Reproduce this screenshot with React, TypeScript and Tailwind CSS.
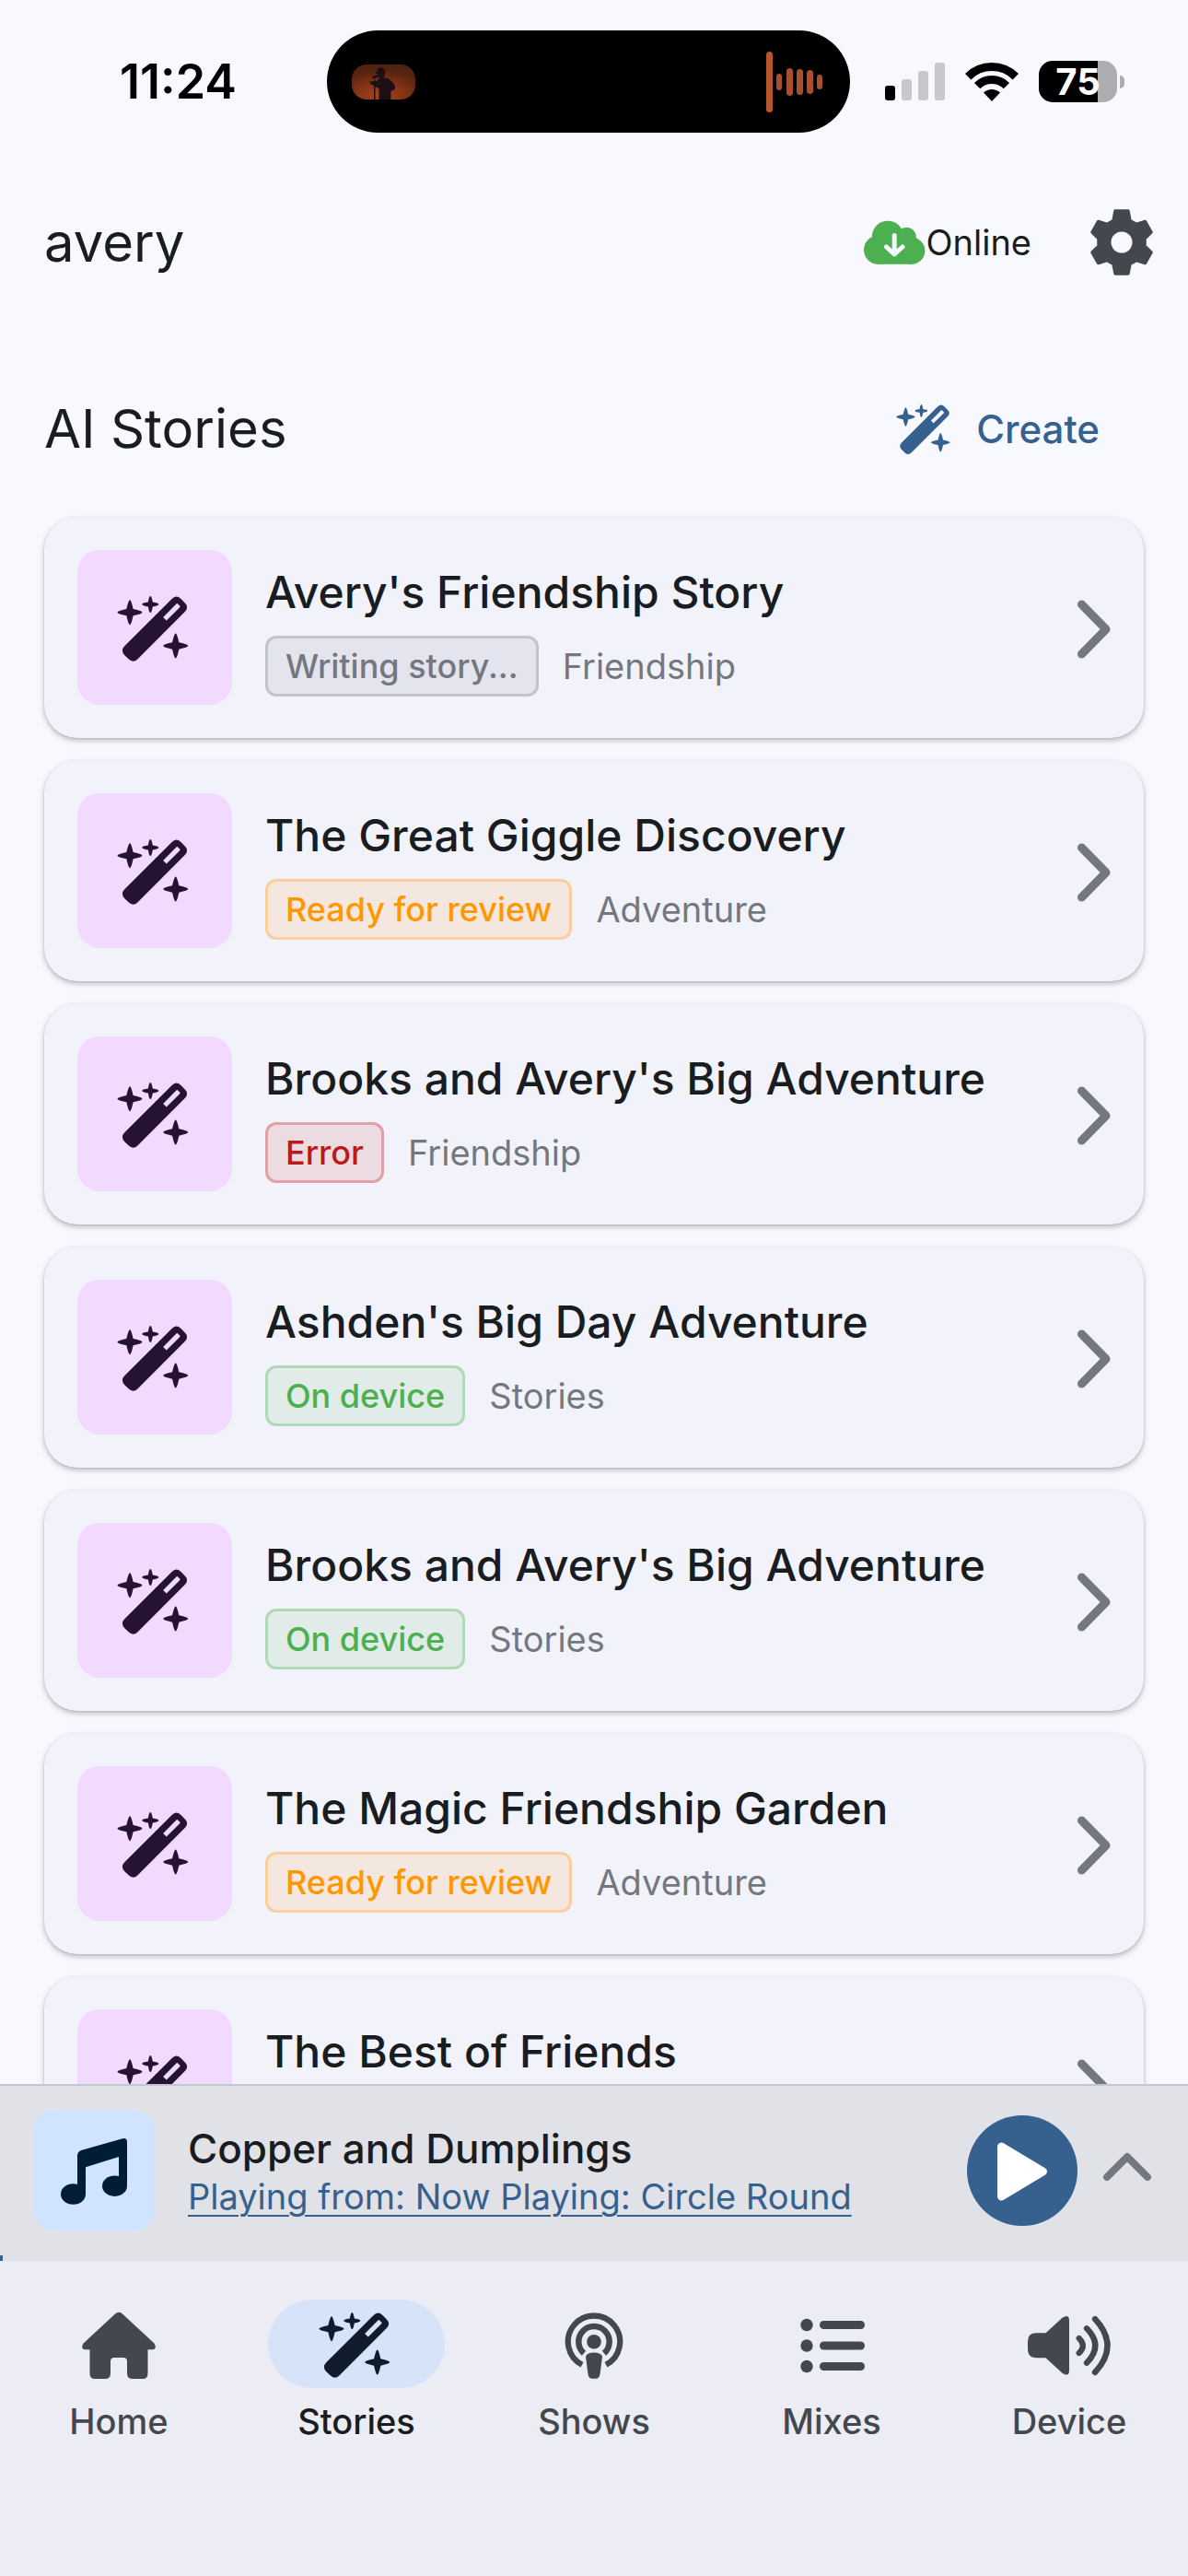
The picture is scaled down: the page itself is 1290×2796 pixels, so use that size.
import clsx from "clsx";
import type { ReactNode } from "react";

type Status = "writing" | "review" | "error" | "device";

const statuses: Record<Status, { label: string; className: string }> = {
  writing: { label: "Writing story...", className: "border-[#c3c3cc] bg-[#e4e4ee] text-[#74777f]" },
  review: { label: "Ready for review", className: "border-[#f9cf9b] bg-[#f4e7e0] text-[#ff9800]" },
  error: { label: "Error", className: "border-[#dfa1a5] bg-[#ecdbe1] text-[#ba1a1a]" },
  device: { label: "On device", className: "border-[#b0d9b8] bg-[#e1ebe7] text-[#4caf50]" },
};

const stories: { title: string; status?: Status; category?: string }[] = [
  { title: "Avery's Friendship Story", status: "writing", category: "Friendship" },
  { title: "The Great Giggle Discovery", status: "review", category: "Adventure" },
  { title: "Brooks and Avery's Big Adventure", status: "error", category: "Friendship" },
  { title: "Ashden's Big Day Adventure", status: "device", category: "Stories" },
  { title: "Brooks and Avery's Big Adventure", status: "device", category: "Stories" },
  { title: "The Magic Friendship Garden", status: "review", category: "Adventure" },
  { title: "The Best of Friends" },
];

// four-pointed sparkle with rounded tips
function star(cx: number, cy: number, r: number) {
  const k = r * 0.27;
  return `M${cx} ${cy - r} Q${cx + 1.5} ${cy - r} ${cx + k} ${cy - k} Q${cx + r} ${cy - 1.5} ${cx + r} ${cy} Q${cx + r} ${cy + 1.5} ${cx + k} ${cy + k} Q${cx + 1.5} ${cy + r} ${cx} ${cy + r} Q${cx - 1.5} ${cy + r} ${cx - k} ${cy + k} Q${cx - r} ${cy + 1.5} ${cx - r} ${cy} Q${cx - r} ${cy - 1.5} ${cx - k} ${cy - k} Q${cx - 1.5} ${cy - r} ${cx} ${cy - r}Z`;
}

function WandIcon({ className }: { className?: string }) {
  return (
    <svg viewBox="-1 -7 84 84" fill="currentColor" className={className} aria-hidden="true">
      <path d={star(14, 18.7, 13.5)} />
      <path d={star(36.3, 10, 9)} />
      <path d={star(63.7, 55, 13.5)} />
      <path
        transform="translate(41 36.7) rotate(45)"
        fillRule="evenodd"
        d="M-3 -43.2H3Q10 -43.2 10 -36V36Q10 43.2 3 43.2H-3Q-10 43.2 -10 36V-36Q-10 -43.2 -3 -43.2ZM-1.5 -37Q-2.6 -37 -2.6 -35.8V-15.5H2.6V-35.8Q2.6 -37 1.5 -37Z"
      />
    </svg>
  );
}

function HomeIcon() {
  return (
    <svg viewBox="0 0 84 84" fill="currentColor" className="size-[84px]" aria-hidden="true">
      <path d="M37.5 10Q42 5.5 46.5 10L80.5 41.5Q84 48 78 48.2H73.5V74Q73.5 80 68 80H57Q51 80 51 74V61Q51 57 47 57H37Q33 57 33 61V74Q33 80 27 80H16Q10.5 80 10.5 74V48.2H6Q0 48 3.5 41.5Z" />
    </svg>
  );
}

function PodcastIcon() {
  return (
    <svg viewBox="0 0 84 84" fill="none" stroke="currentColor" className="size-[84px]" aria-hidden="true">
      <path d="M29 64.7A28.2 28.2 0 1 1 55 64.7" strokeWidth="6.3" />
      <path d="M31 52.3A16.7 16.7 0 1 1 53 52.3" strokeWidth="6.5" />
      <circle cx="42" cy="39.7" r="7.8" fill="currentColor" stroke="none" />
      <path d="M33 56Q34 51.5 42 51.5T51 56L48.5 75Q47.7 79.7 44 79.7H40Q36.3 79.7 35.5 75Z" fill="currentColor" stroke="none" />
    </svg>
  );
}

function ListIcon() {
  return (
    <svg viewBox="0 0 84 84" fill="currentColor" className="size-[84px]" aria-hidden="true">
      {[21.5, 44, 66.5].map((y) => (
        <g key={y}>
          <circle cx="15" cy={y} r="6.7" />
          <rect x="29" y={y - 4.5} width="49" height="9" rx="4.5" />
        </g>
      ))}
    </svg>
  );
}

function SpeakerIcon() {
  return (
    <svg viewBox="0 0 96 84" fill="currentColor" className="h-[84px] w-24" aria-hidden="true">
      <path d="M12 30.3H22.5L40.5 13.8Q48 9 48 17V71Q48 78.5 40.5 73.7L22.5 57.2H12Q3 57 3 48V39.5Q3 30.3 12 30.3Z" />
      <g fill="none" stroke="currentColor" strokeWidth="6.3" strokeLinecap="round">
        <path d="M58.7 36Q67 44 58.7 52" />
        <path d="M67 25.3Q85.6 44 67 62.7" />
        <path d="M76 15Q103 44 76 73" />
      </g>
    </svg>
  );
}

function CloudIcon() {
  return (
    <svg viewBox="0 0 67 48" fill="#4caf50" className="h-12 w-[67px]" aria-hidden="true">
      <circle cx="15.5" cy="32.3" r="15.5" />
      <circle cx="26" cy="18" r="17.2" />
      <circle cx="46.5" cy="18" r="10.2" />
      <circle cx="51.8" cy="33.2" r="14.6" />
      <rect x="15" y="20" width="37" height="27.8" />
      <path d="M33.2 16.5V36M24.5 29L33.2 37L42 29" fill="none" stroke="#f8f9ff" strokeWidth="5" strokeLinecap="round" strokeLinejoin="round" />
    </svg>
  );
}

function GearIcon() {
  return (
    <svg viewBox="-36 -36 72 72" className="size-[72px]" aria-hidden="true">
      <path
        d="M-7 -34H7L9 -23.5L16 -19.5L25.5 -22.5L32 -11L25 -4V4L32 11L25.5 22.5L16 19.5L9 23.5L7 34H-7L-9 23.5L-16 19.5L-25.5 22.5L-32 11L-25 4V-4L-32 -11L-25.5 -22.5L-16 -19.5L-9 -23.5Z"
        fill="#43474e"
        stroke="#43474e"
        strokeWidth="3.5"
        strokeLinejoin="round"
      />
      <circle r="11.5" fill="#f8f9ff" />
    </svg>
  );
}

function MusicIcon() {
  return (
    <svg viewBox="0 0 84 84" fill="currentColor" className="size-[84px]" aria-hidden="true">
      <path d="M24 26Q24 21.5 28 20L73 7.2Q78 6 78 11V58.7H69V27L33 38.3V67.5H24Z" />
      <ellipse cx="19.5" cy="67.5" rx="13.5" ry="11.2" />
      <ellipse cx="64.5" cy="58.7" rx="13.5" ry="11.2" />
    </svg>
  );
}

function StatusBar() {
  return (
    <div className="grid h-[177px] shrink-0 grid-cols-[355fr_568fr_367fr] items-center text-black">
      <time className="pl-8 text-center text-[52px] leading-[60px] font-semibold">11:24</time>
      <div className="flex h-[111px] items-center justify-between rounded-full bg-black pr-[28px] pl-[27px]">
        <svg viewBox="0 0 69 38" className="h-[38px] w-[69px]" aria-hidden="true">
          <defs>
            <radialGradient id="glow" cx="0.45" cy="0.9" r="0.75">
              <stop offset="0" stopColor="#a8441a" />
              <stop offset="0.6" stopColor="#7c3114" />
              <stop offset="1" stopColor="#54230f" />
            </radialGradient>
          </defs>
          <rect width="69" height="38" rx="16" fill="url(#glow)" />
          <g fill="#1c1015">
            <path d="M27 8Q28 3 32 3Q36.500 4 36 9Q36 12 34.500 14Q41 15 43 18Q48 23 47 26Q45 29 42.500 28.500V38H29.500V26L20 21L19.500 18.500L27 18L30.500 14L28.500 12L28 10H25.500Z" />
            <path d="M22 13L29 11L30 13.500L23 15.500ZM24 16H25.500V38H24Z" />
          </g>
        </svg>
        <svg viewBox="0 0 63 68" className="h-[68px] w-[63px]" fill="#a84f30" aria-hidden="true">
          <rect x="0" y="1" width="7" height="66" rx="3.5" fill="#b5562d" />
          <rect x="11" y="25" width="6" height="18" rx="3" />
          <rect x="22" y="19" width="7" height="30" rx="3.5" />
          <rect x="33" y="20" width="7" height="28" rx="3.5" />
          <rect x="44" y="21" width="7" height="26" rx="3.5" />
          <rect x="55" y="26" width="6" height="16" rx="3" />
        </svg>
      </div>
      <div className="flex items-center gap-[22px] pl-[38px]">
        <svg viewBox="0 0 65 42" className="h-[42px] w-[65px]" fill="#c7c8cd" aria-hidden="true">
          <rect x="0" y="25" width="11" height="16" rx="3" fill="#000" />
          <rect x="18" y="18" width="11" height="23" rx="3" />
          <rect x="36" y="9" width="11" height="32" rx="3" />
          <rect x="54" y="0" width="11" height="41" rx="3" />
        </svg>
        <svg viewBox="0 0 58 42" className="h-[42px] w-[58px]" fill="none" stroke="#000" strokeWidth="9" aria-hidden="true">
          <path d="M3.2 15.2A36.5 36.5 0 0 1 54.8 15.2" />
          <path d="M13.1 25.1A22.5 22.5 0 0 1 44.9 25.1" />
          <path d="M29 42L20 32.6A13 13 0 0 1 38 32.6Z" fill="#000" stroke="none" />
        </svg>
        <div className="flex items-center gap-[3px]">
          <div className="flex h-[45px] w-[85px] items-center justify-center rounded-[15px] bg-[linear-gradient(90deg,#000_75%,#acadb1_75%)] text-[40px] leading-none font-bold text-white">
            75
          </div>
          <div className="h-[14px] w-[5px] rounded-r-full bg-[#acadb1]" />
        </div>
      </div>
    </div>
  );
}

function StoryCard({ title, status, category }: (typeof stories)[number]) {
  return (
    <li>
      <a
        href="#"
        className="flex items-center rounded-[36px] bg-[#f2f3fa] py-9 pr-8 pl-9 shadow-[0_3px_6px_rgba(0,0,0,0.22),0_1px_3px_rgba(0,0,0,0.12)]"
      >
        <span className="flex size-[168px] shrink-0 items-center justify-center rounded-[24px] bg-[#f2daff] text-[#251431]">
          <WandIcon className="size-[84px]" />
        </span>
        <span className="ml-9 flex min-w-0 flex-1 flex-col gap-[14px] pt-1">
          <span className="truncate text-[48px] leading-[66px] font-medium text-[#191c20]">{title}</span>
          <span className="flex min-h-[66px] items-center gap-[26px]">
            {status && (
              <span
                className={clsx(
                  "rounded-[12px] border-[3px] px-[19px] py-[8px] text-[36px] leading-[44px] font-medium",
                  statuses[status].className
                )}
              >
                {statuses[status].label}
              </span>
            )}
            {category && <span className="text-[38px] leading-[48px] text-[#74777f]">{category}</span>}
          </span>
        </span>
        <svg viewBox="0 0 44 68" className="h-[68px] w-11 shrink-0" fill="none" stroke="#74777f" strokeWidth="9" strokeLinecap="round" strokeLinejoin="round" aria-hidden="true">
          <path d="M8.5 9L35 36L8.500 63" />
        </svg>
      </a>
    </li>
  );
}

function MiniPlayer() {
  return (
    <section className="relative flex shrink-0 items-center border-t-2 border-[#c3c6cf] bg-[#e1e2e8] pt-[26px] pr-[36px] pb-[32px] pl-9">
      <div className="flex size-[132px] shrink-0 items-center justify-center rounded-[24px] bg-[#d1e4ff] text-[#001d36]">
        <MusicIcon />
      </div>
      <div className="ml-9 min-w-0 flex-1">
        <p className="truncate text-[44px] leading-[56px] font-medium text-[#191c20]">Copper and Dumplings</p>
        <a href="#" className="text-[38px] leading-[48px] text-[#36618e] underline decoration-2 underline-offset-[6px]">
          Playing from: Now Playing: Circle Round
        </a>
      </div>
      <button type="button" aria-label="Play" className="size-[120px] shrink-0 rounded-full bg-[#36618e]">
        <svg viewBox="0 0 120 120" fill="#fff" stroke="#fff" strokeWidth="9" strokeLinejoin="round" aria-hidden="true">
          <path d="M37.5 34V88L82.5 61Z" />
        </svg>
      </button>
      <button type="button" aria-label="Expand player" className="ml-6 shrink-0">
        <svg viewBox="0 0 60 40" className="h-10 w-[60px]" fill="none" stroke="#74777f" strokeWidth="8" strokeLinecap="round" strokeLinejoin="round" aria-hidden="true">
          <path d="M8 27L30 5L52 27" />
        </svg>
      </button>
      <div className="absolute bottom-0 left-0 h-[6px] w-[3px] bg-[#36618e]" />
    </section>
  );
}

const tabs: { label: string; icon: ReactNode; active?: boolean }[] = [
  { label: "Home", icon: <HomeIcon /> },
  { label: "Stories", icon: <WandIcon className="size-[84px]" />, active: true },
  { label: "Shows", icon: <PodcastIcon /> },
  { label: "Mixes", icon: <ListIcon /> },
  { label: "Device", icon: <SpeakerIcon /> },
];

export default function App() {
  return (
    <div className="flex h-screen flex-col overflow-hidden bg-[#f8f9ff] font-[Inter,'Liberation_Sans',sans-serif] text-[#191c20]">
      <StatusBar />

      <header className="flex h-[172px] shrink-0 items-center justify-between pr-9 pl-12">
        <h1 className="text-[58px] leading-[84px]">avery</h1>
        <div className="flex items-center">
          <CloudIcon />
          <span className="text-[38px] leading-[48px]">Online</span>
          <button type="button" aria-label="Settings" className="ml-[62px]">
            <GearIcon />
          </button>
        </div>
      </header>

      <main className="min-h-0 flex-1 overflow-hidden px-12">
        <div className="flex items-center justify-between pt-14 pb-9">
          <h2 className="text-[58px] leading-[84px]">AI Stories</h2>
          <button type="button" className="flex h-[120px] items-center gap-6 px-12 text-[42px] font-medium text-[#36618e]">
            <WandIcon className="size-[64px]" />
            Create
          </button>
        </div>
        <ul className="flex flex-col gap-6">
          {stories.map((story, i) => (
            <StoryCard key={i} {...story} />
          ))}
        </ul>
      </main>

      <MiniPlayer />

      {/* Bottom navigation */}
      <nav className="grid shrink-0 grid-cols-5 bg-[#ecedf4] pt-[42px] pb-[144px] text-[#43474e]">
        {tabs.map((tab) => (
          <a
            key={tab.label}
            href="#"
            aria-current={tab.active ? "page" : undefined}
            className={clsx("flex flex-col items-center gap-3", tab.active && "text-[#191c20]")}
          >
            <span
              className={clsx(
                "flex h-24 w-48 items-center justify-center rounded-full",
                tab.active && "bg-[#d7e3f8] text-[#101c2b]"
              )}
            >
              {tab.icon}
            </span>
            <span className="text-[38px] leading-[48px] font-medium">{tab.label}</span>
          </a>
        ))}
      </nav>
    </div>
  );
}
